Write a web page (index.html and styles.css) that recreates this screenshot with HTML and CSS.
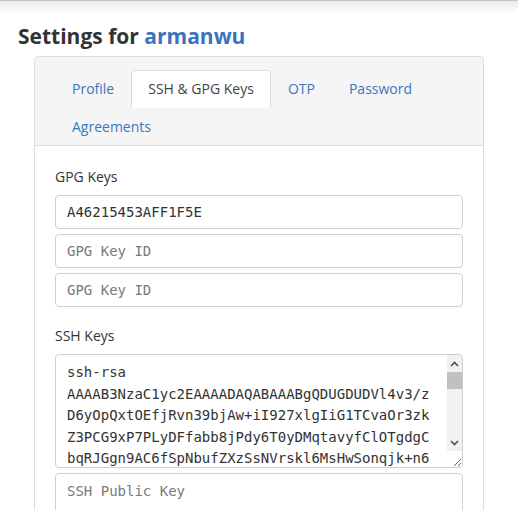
FILE: index.html
```html
<!DOCTYPE html>
<html>
<head>
    <title>Settings for armanwu</title>
    <link rel="stylesheet" href="styles.css">
</head>
<body>
    <div class="topbar"></div>
    <div class="page">
        <h2 class="title">Settings for <a href="#" class="user">armanwu</a></h2>
        <div class="card">
            <div class="card-header">
                <ul class="tabs">
                    <li><a href="#" class="tab">Profile</a></li>
                    <li><a href="#" class="tab active">SSH &amp; GPG Keys</a></li>
                    <li><a href="#" class="tab">OTP</a></li>
                    <li><a href="#" class="tab">Password</a></li>
                    <li><a href="#" class="tab">Agreements</a></li>
                </ul>
            </div>
            <div class="card-body">
                <div class="group">
                    <label class="label">GPG Keys</label>
                    <input class="field" type="text" value="A46215453AFF1F5E">
                    <input class="field" type="text" placeholder="GPG Key ID">
                    <input class="field" type="text" placeholder="GPG Key ID">
                </div>
                <div class="group">
                    <label class="label">SSH Keys</label>
                    <div class="keywrap">
                        <textarea class="field keybox">ssh-rsa AAAAB3NzaC1yc2EAAAADAQABAAABgQDUGDUDVl4v3/zD6yOpQxtOEfjRvn39bjAw+iI927xlgIiG1TCvaOr3zkZ3PCG9xP7PLyDFfabb8jPdy6T0yDMqtavyfClOTgdgCbqRJGgn9AC6fSpNbufZXzSsNVrskl6MsHwSonqjk+n6Hk2vQpL0xT9mRb7cWfYd3Ee8uNz1KjAs5Gq4PiVo6Xl2Zr0tBn+MhU7yDc3Sa8fLwQe9Ij1Ko5TgRz4vXp2NbYm6Hs0Cu7Ea3Df8Lk1Wq9Pj5Gt2Mx4Ry6Vn0Bi+Ue3Zc7Sh8Ko1Ta9Yd5Fw2Lp6Qm4Jr0Xs3Ng7Cv1Eb8Hz5Au2Ik9Oy6Mt3Pl0Gd4Rf7Wq1Ks8Vj5Bn2Xh9Tc6Ye3Zm0La7Fu4Sg1Dp8Nw5Ir2Ok9Cx6Hb3Qv0Ej7Mt4Ys1Ga8Kd5Wn2Pf9Rz6Ul3Bc0Ti7Xq4Vh1Lm8Sw5Jo2Ne9Dk6Ay3Fg0Cp7Ir4Eu1Hx8Qb5Mz2Ot9Kv6Gs3Yf0Pn7Rw4Tj1Lc8Ad5Xm2Bq9Zh6Ue3Sk0Wi7Vg4Nl1Fo8Cy5Ep2Jt9Mb6Hr3Qd0Dx7Gw4Iz1Pk8Ts5Ya2Lu9Os6Kf3Bn0Xj7Rc4Vq1Ze8Wm5Ug2Sh9Nv6Ai3El0Hy7Co4Jp1Mt8Fb5Qx2Gr9Dk6Iw3Lz0Tu7Os4Pe1Ya8Kn5Bd2Wj9Xc6Rf3Vm0Sg7Nh4Zq1Ub8Ml5Ct2Ev9Jo6Ha3Fi0Qy7Ds4Ip1Gx8Lw5Tk2Pr9Ob6Ku3Yz0Bn7Xe4Wd1Rg8Vj5Sc2Ah9Zm6Ut3Nf0Mq7Cl4Ey1Js8Hv5Fo2Qi9Dw6Ib3Gp0Lx7Tz4Pk1Oa8Ke5Yr2Bs9Xn6Wu3Rd0Vg7Sj4Ac1Zh8Um5Nt2Mf9Cq6El3Jy0Ho7Fs4Qv1Db8Iw5Gi2Lp9Tx6Pz3Ok0Ya7Kr4Bu1Xe8Wn5Rs2Vd9Sg6Aj3Zc0Uh7Nm4Mt1Cf8Eq5Jl2Hy9Fo6Qs3Dv0Ib7Gw4Li1Tp8Px5Oz2Ka9Ye6Br3Xu0Wk7Rn4Vs1Sd8Ag5Zj2Uc9Nh6Mm3Ct0Ef7Jq4Hl1Fy8Qo5Ds2Iv9Gb6Lw3Ti0Pp7Ox4Kz1Ya8Be5Xr2Wu9Rk6Vn3Sd0Ag= armanwu@laptop</textarea>
                        <div class="scrollbar">
                            <span class="sb-btn">
                                <svg width="9" height="6" viewBox="0 0 9 6"><path d="M1 5 L4.5 1.5 L8 5" fill="none" stroke="#505050" stroke-width="1.6"/></svg>
                            </span>
                            <span class="sb-track"><span class="sb-thumb"></span></span>
                            <span class="sb-btn">
                                <svg width="9" height="6" viewBox="0 0 9 6"><path d="M1 1 L4.5 4.5 L8 1" fill="none" stroke="#505050" stroke-width="1.6"/></svg>
                            </span>
                        </div>
                    </div>
                    <textarea class="field keybox plain" placeholder="SSH Public Key"></textarea>
                </div>
            </div>
        </div>
    </div>
</body>
</html>
```

FILE: styles.css
```css
/* settings page: header, tabbed card and key fields */
body {
    margin: 0;
    background-color: #fff;
    color: #333;
    font-family: "Open Sans", Arial, sans-serif;
    font-size: 14px;
    line-height: 1.5;
}

/* shadow left under the navbar */
.topbar {
    height: 12px;
    border-top: 1px solid #c4c4c4;
    background: linear-gradient(#e9e9e9, #fff);
}

.page {
    padding: 0 18px;
}

.title {
    margin: 8px 0 5px;
    font-size: 21px;
    font-weight: 700;
    line-height: 30px;
    color: #333;
}

.user {
    color: #3a72c0;
    text-decoration: none;
}

.card {
    margin-left: 16px;
    width: 450px;
    box-sizing: border-box;
    border: 1px solid #ddd;
    border-radius: 4px;
    overflow: hidden;
}

.card-header {
    background-color: #f5f5f5;
    border-bottom: 1px solid #ddd;
    padding: 13px 20px 0;
}

.tabs {
    display: flex;
    flex-wrap: wrap;
    list-style: none;
    margin: 0 0 -1px;
    padding: 0;
}

.tab {
    display: block;
    padding: 8px 16px;
    line-height: 20px;
    border: 1px solid transparent;
    border-radius: 4px 4px 0 0;
    color: #3d74c0;
    text-decoration: none;
}

.tab.active {
    background-color: #fff;
    border-color: #ddd #ddd transparent;
    color: #444;
}

.card-body {
    padding: 20px 20px 10px;
}

.group {
    display: flex;
    flex-direction: column;
    gap: 5px;
    margin-bottom: 18px;
}

.label {
    margin-bottom: 3px;
    line-height: 21px;
}

.field {
    box-sizing: border-box;
    width: 100%;
    height: 34px;
    margin: 0;
    padding: 6px 11px;
    border: 1px solid #ccd0d6;
    border-radius: 4px;
    font-family: "DejaVu Sans Mono", monospace;
    font-size: 14px;
    line-height: 20px;
    color: #333;
    background-color: #fff;
}

.field::placeholder {
    color: #7a7a7a;
}

.keywrap {
    position: relative;
    height: 114px;
}

.keybox {
    display: block;
    height: 114px;
    line-height: 21.5px;
    padding: 7px 27px 6px 11px;
    resize: vertical;
    overflow: hidden;
}

.keybox.plain {
    padding-right: 11px;
}

/* scrollbar drawn over the right edge of the key box */
.scrollbar {
    position: absolute;
    top: 1px;
    right: 1px;
    width: 15px;
    height: 96px;
    display: flex;
    flex-direction: column;
    background-color: #f1f1f1;
    border-top-right-radius: 3px;
}

.sb-btn {
    height: 17px;
    display: flex;
    align-items: center;
    justify-content: center;
}

.sb-track {
    flex: 1;
}

.sb-thumb {
    display: block;
    height: 17px;
    background-color: #c1c1c1;
}
```
